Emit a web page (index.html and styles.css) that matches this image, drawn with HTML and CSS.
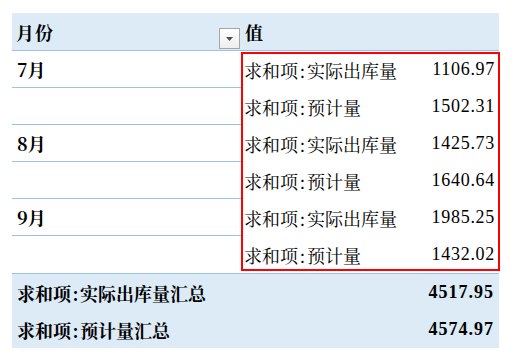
FILE: index.html
```html
<!DOCTYPE html>
<html lang="zh-CN">
<head>
<meta charset="utf-8">
<link rel="stylesheet" href="styles.css">
</head>
<body>
<div class="pivot">
  <div class="hdr">
    <div class="col-month hcell">月份<span class="dd"><svg width="7" height="4" viewBox="0 0 7 4"><polygon points="0,0 7,0 3.5,4" fill="#4d4d4d"/></svg></span></div>
    <div class="col-val hcell">值</div>
  </div>
  <div class="body">
    <div class="months col-month">
      <div class="mcell">7月</div>
      <div class="mcell"></div>
      <div class="mcell">8月</div>
      <div class="mcell"></div>
      <div class="mcell">9月</div>
      <div class="mcell last"></div>
    </div>
    <div class="values col-val">
      <div class="vrow"><span>求和项<span class="colon">:</span>实际出库量</span><span class="num">1106.97</span></div>
      <div class="vrow"><span>求和项<span class="colon">:</span>预计量</span><span class="num">1502.31</span></div>
      <div class="vrow"><span>求和项<span class="colon">:</span>实际出库量</span><span class="num">1425.73</span></div>
      <div class="vrow"><span>求和项<span class="colon">:</span>预计量</span><span class="num">1640.64</span></div>
      <div class="vrow"><span>求和项<span class="colon">:</span>实际出库量</span><span class="num">1985.25</span></div>
      <div class="vrow"><span>求和项<span class="colon">:</span>预计量</span><span class="num">1432.02</span></div>
    </div>
    <div class="redbox"></div>
  </div>
  <div class="totals">
    <div class="trow"><span>求和项<span class="colon">:</span>实际出库量汇总</span><span class="num">4517.95</span></div>
    <div class="trow"><span>求和项<span class="colon">:</span>预计量汇总</span><span class="num">4574.97</span></div>
  </div>
</div>
</body>
</html>
```

FILE: styles.css
```css
html, body {
  margin: 0;
  padding: 0;
  background: #ffffff;
}
body {
  font-family: "Noto Serif CJK SC", "Noto Sans CJK SC", serif;
  font-size: 18px;
  color: #000;
}
.pivot {
  margin: 13px 0 0 12px;
  width: 487px;
}
.hdr {
  display: flex;
  height: 37px;
  background: #ddebf7;
  border-bottom: 1px solid #9bc2e6;
}
.col-month {
  width: 229px;
  flex: none;
}
.col-val {
  flex: 1;
}
.hcell {
  display: flex;
  align-items: center;
  font-weight: bold;
  position: relative;
}
.hdr .col-month {
  padding-left: 4px;
  box-sizing: border-box;
  letter-spacing: 1px;
}
.hdr .col-val {
  padding-left: 4px;
}
.dd {
  position: absolute;
  right: 1px;
  top: 15px;
  width: 19px;
  height: 19px;
  border: 1px solid #a6a6a6;
  background: linear-gradient(#ffffff, #eeeeee);
  display: flex;
  align-items: center;
  justify-content: center;
}
.body {
  display: flex;
  position: relative;
  border-bottom: 1px solid #9bc2e6;
}
.mcell {
  height: 36px;
  border-bottom: 1px solid #9bc2e6;
  display: flex;
  align-items: center;
  padding-left: 5px;
  font-weight: bold;
}
.mcell.last {
  height: 37px;
  border-bottom: none;
}
.vrow {
  height: 37px;
  display: flex;
  align-items: center;
  justify-content: space-between;
  padding: 0 4px 0 3px;
}
.colon {
  padding: 0 1.5px;
}
.num {
  font-family: "Liberation Serif", serif;
  font-size: 18px;
  letter-spacing: 0.7px;
}
.redbox {
  position: absolute;
  left: 229px;
  top: 1px;
  width: 255px;
  height: 215px;
  border: 2px solid #ff0000;
}
.totals {
  background: #ddebf7;
}
.trow {
  height: 37px;
  display: flex;
  align-items: center;
  justify-content: space-between;
  padding: 0 5px 0 5px;
  font-weight: bold;
}
.trow .num {
  font-weight: bold;
  letter-spacing: 1px;
}
```
